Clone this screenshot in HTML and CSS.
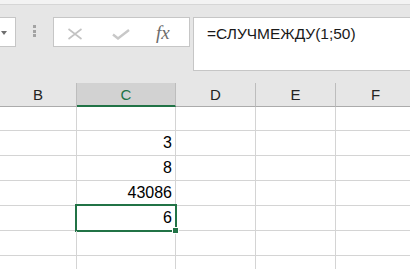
FILE: index.html
```html
<!DOCTYPE html>
<html lang="ru">
<head>
  <meta charset="UTF-8">
  <title>Excel</title>
  <link rel="stylesheet" href="styles.css">
</head>
<body>
  <div class="ribbon-edge"></div>
  <div class="formula-row">
    <div class="name-box"><span class="arrow"></span></div>
    <div class="grip"><i></i><i></i><i></i></div>
    <div class="fx-buttons">
      <svg class="btn-cancel" width="16" height="12" viewBox="0 0 16 12">
        <path d="M1.5 1 L14.5 11 M14.5 1 L1.5 11" stroke="#c3c3c3" stroke-width="1.6" fill="none"/>
      </svg>
      <svg class="btn-enter" width="18" height="11" viewBox="0 0 18 11">
        <path d="M1 5.5 L6 9.5 L17 1" stroke="#c8c8c8" stroke-width="2.4" fill="none"/>
      </svg>
      <span class="btn-fx">fx</span>
    </div>
    <div class="formula-input">=СЛУЧМЕЖДУ(1;50)</div>
  </div>

  <div class="sheet">
    <div class="row head">
      <div class="cell col-b">B</div>
      <div class="cell col-c active">C</div>
      <div class="cell col-d">D</div>
      <div class="cell col-e">E</div>
      <div class="cell col-f">F</div>
      <div class="cell col-g"></div>
    </div>
    <div class="row first">
      <div class="cell col-b"></div>
      <div class="cell col-c"></div>
      <div class="cell col-d"></div>
      <div class="cell col-e"></div>
      <div class="cell col-f"></div>
      <div class="cell col-g"></div>
    </div>
    <div class="row">
      <div class="cell col-b"></div>
      <div class="cell col-c num">3</div>
      <div class="cell col-d"></div>
      <div class="cell col-e"></div>
      <div class="cell col-f"></div>
      <div class="cell col-g"></div>
    </div>
    <div class="row">
      <div class="cell col-b"></div>
      <div class="cell col-c num">8</div>
      <div class="cell col-d"></div>
      <div class="cell col-e"></div>
      <div class="cell col-f"></div>
      <div class="cell col-g"></div>
    </div>
    <div class="row">
      <div class="cell col-b"></div>
      <div class="cell col-c num">43086</div>
      <div class="cell col-d"></div>
      <div class="cell col-e"></div>
      <div class="cell col-f"></div>
      <div class="cell col-g"></div>
    </div>
    <div class="row">
      <div class="cell col-b"></div>
      <div class="cell col-c num selected">6<span class="handle"></span></div>
      <div class="cell col-d"></div>
      <div class="cell col-e"></div>
      <div class="cell col-f"></div>
      <div class="cell col-g"></div>
    </div>
    <div class="row">
      <div class="cell col-b"></div>
      <div class="cell col-c"></div>
      <div class="cell col-d"></div>
      <div class="cell col-e"></div>
      <div class="cell col-f"></div>
      <div class="cell col-g"></div>
    </div>
    <div class="row">
      <div class="cell col-b"></div>
      <div class="cell col-c"></div>
      <div class="cell col-d"></div>
      <div class="cell col-e"></div>
      <div class="cell col-f"></div>
      <div class="cell col-g"></div>
    </div>
  </div>
</body>
</html>
```

FILE: styles.css
```css
* {
  margin: 0;
  padding: 0;
  box-sizing: border-box;
}
body {
  width: 410px;
  height: 269px;
  overflow: hidden;
  background: #fff;
  font-family: 'Liberation Sans', Arial, sans-serif;
  color: #000;
}
.ribbon-edge {
  height: 5px;
  background: #f3f3f3;
  border-bottom: 1px solid #d6d6d6;
}
.formula-row {
  height: 78px;
  background: #e6e6e6;
  display: flex;
  align-items: flex-start;
  padding-top: 12px;
  overflow: hidden;
}
.name-box {
  width: 16px;
  height: 30px;
  background: #fff;
  border: 1px solid #c6c6c6;
  border-left: none;
  position: relative;
}
.name-box .arrow {
  position: absolute;
  left: 1px;
  top: 13px;
  border-left: 3.5px solid transparent;
  border-right: 3.5px solid transparent;
  border-top: 4px solid #6e6e6e;
}
.grip {
  margin-left: 17px;
  padding-top: 8px;
  display: flex;
  flex-direction: column;
  gap: 1.5px;
}
.grip i {
  display: block;
  width: 3px;
  height: 3px;
  background: #a3a3a3;
}
.fx-buttons {
  margin-left: 17px;
  width: 137px;
  height: 30px;
  background: #fff;
  border: 1px solid #c6c6c6;
  display: flex;
  align-items: center;
}
.btn-cancel {
  margin-left: 13px;
  margin-top: 3px;
}
.btn-enter {
  margin-left: 29px;
  margin-top: 5px;
}
.btn-fx {
  margin-left: 26px;
  font-family: 'Liberation Serif', 'Times New Roman', serif;
  font-style: italic;
  font-size: 19px;
  color: #6c6c6c;
  margin-top: 1px;
}
.formula-input {
  margin-left: 3px;
  height: 54px;
  flex: 1;
  margin-right: -10px;
  background: #fff;
  border: 1px solid #c6c6c6;
  font-size: 15.5px;
  padding: 7px 0 0 13px;
  color: #1a1a1a;
}
.sheet {
  overflow: hidden;
}
.row {
  display: flex;
  height: 25px;
}
.row.head {
  height: 24px;
  background: #e6e6e6;
}
.row.first {
  height: 24px;
}
.cell {
  flex: none;
  border-right: 1px solid #d4d4d4;
  border-bottom: 1px solid #d4d4d4;
  font-size: 16px;
  line-height: 24px;
  position: relative;
}
.head .cell {
  border-right-color: #bdbdbd;
  border-bottom-color: #ababab;
  text-align: center;
  font-size: 15px;
  line-height: 24px;
  color: #222;
}
.head .cell.active {
  background: #d2d2d2;
  color: #217346;
  border-bottom: 2px solid #217346;
  line-height: 23px;
}
.col-b { width: 77px; }
.col-c { width: 99px; }
.col-d { width: 80px; }
.col-e { width: 80px; }
.col-f { width: 80px; }
.col-g { width: 80px; }
.num {
  text-align: right;
  padding-right: 3px;
}
.selected::after {
  content: '';
  position: absolute;
  left: -2px;
  top: -2px;
  right: -2px;
  bottom: -2px;
  border: 2px solid #217346;
}
.handle {
  position: absolute;
  right: -4px;
  bottom: -4px;
  width: 7px;
  height: 7px;
  background: #217346;
  border: 1px solid #fff;
  z-index: 2;
}
```
